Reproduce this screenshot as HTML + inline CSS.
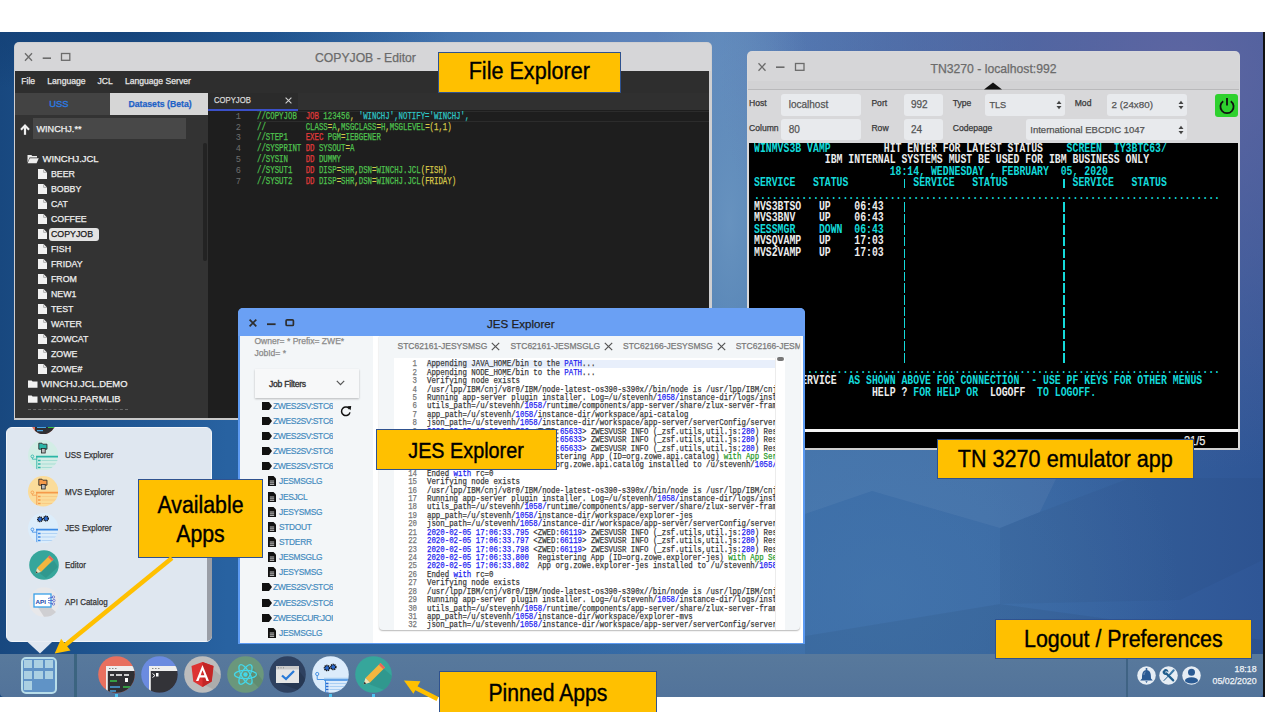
<!DOCTYPE html>
<html><head><meta charset="utf-8"><style>
*{margin:0;padding:0;box-sizing:border-box}
html,body{width:1265px;height:712px;overflow:hidden;background:#fff;font-family:"Liberation Sans",sans-serif}
.a{position:absolute;-webkit-text-stroke-width:0.25px}
.call{position:absolute;-webkit-text-stroke:0.35px #000;background:#ffc000;border:1px solid #2f528f;color:#000;font-family:"Liberation Sans",sans-serif;text-align:center;white-space:nowrap}
</style></head><body>
<div class="a" style="left:0;top:32px;width:1263px;height:665px;overflow:hidden;background:radial-gradient(ellipse 330px 60px at 120px 0px, rgba(18,62,115,0.75), rgba(18,62,115,0) 100%),radial-gradient(ellipse 460px 400px at 1180px 40px, rgba(96,102,162,0.95), rgba(96,102,162,0) 100%),radial-gradient(ellipse 90px 330px at 730px 190px, rgba(105,148,192,0.95), rgba(105,148,192,0.5) 60%, rgba(105,148,192,0) 100%),radial-gradient(ellipse 380px 200px at 650px 20px, rgba(100,135,190,0.9), rgba(100,135,190,0) 100%),radial-gradient(ellipse 300px 260px at 880px 560px, rgba(70,120,175,0.6), rgba(70,120,175,0) 100%),linear-gradient(90deg,#18487f 0%,#1e5490 8%,#2862a1 18%,#2d66a3 35%,#3a6ca6 60%,#3a69a3 78%,#2f5696 100%)"></div>
<div class="a" style="left:1263px;top:32px;width:2px;height:665px;background:#111;"></div>
<svg class="a" style="left:0;top:0" width="1265" height="712"><g><path d="M805 450H1070L1040 512L1000 528L872 491L805 514Z" fill="#ffffff" opacity="0.05"/><path d="M805 636L1000 604L1263 640V654H805Z" fill="#000" opacity="0.05"/><path d="M1000 528L1040 512L1130 478H1263V560L1180 600L1000 604Z" fill="#000" opacity="0.03"/></g></svg>
<div class="a" style="left:14px;top:42px;width:698px;height:378px;background:#cfcfd1;border-radius:5px 5px 0 0"></div>
<div class="a" style="left:15px;top:43px;width:696px;height:28px;background:#d6d6d8;border-radius:4px 4px 0 0"></div>
<svg class="a" style="left:14px;top:42px" width="70" height="28"><g stroke="#6b6b6b" stroke-width="1.3" fill="none"><path d="M11 11.2L18 18.8M18 11.2L11 18.8"/><path d="M28.7 16.2H37" stroke-width="1.6"/><rect x="47.5" y="11.5" width="8.3" height="6.8"/></g></svg>
<div class="a" style="left:315px;top:47.90px;line-height:20px;font-size:12.2px;color:#6b6b6b;font-weight:400;font-family:'Liberation Sans';white-space:pre;">COPYJOB - Editor</div>
<div class="a" style="left:15px;top:71px;width:694px;height:348px;background:#1e1e1e;"></div>
<div class="a" style="left:15px;top:71px;width:694px;height:22px;background:#2e2e2e;"></div>
<div class="a" style="left:21.3px;top:71.00px;line-height:20px;font-size:8.6px;color:#e6e6e6;font-weight:400;font-family:'Liberation Sans';white-space:pre;">File</div>
<div class="a" style="left:47.3px;top:71.00px;line-height:20px;font-size:8.6px;color:#e6e6e6;font-weight:400;font-family:'Liberation Sans';white-space:pre;">Language</div>
<div class="a" style="left:97.4px;top:71.00px;line-height:20px;font-size:8.6px;color:#e6e6e6;font-weight:400;font-family:'Liberation Sans';white-space:pre;">JCL</div>
<div class="a" style="left:124.9px;top:71.00px;line-height:20px;font-size:8.6px;color:#e6e6e6;font-weight:400;font-family:'Liberation Sans';white-space:pre;">Language Server</div>
<div class="a" style="left:15px;top:93px;width:193px;height:22px;background:#3d3d3d;"></div>
<div class="a" style="left:15px;top:93px;width:95px;height:22px;background:#434343;"></div>
<div class="a" style="left:110px;top:93px;width:98px;height:22px;background:#d6d6d6;"></div>
<div class="a" style="left:49.3px;top:94.00px;line-height:20px;font-size:9.4px;color:#2b7de6;font-weight:400;font-family:'Liberation Sans';white-space:pre;-webkit-text-stroke-width:0.3px">USS</div>
<div class="a" style="left:128.4px;top:94.00px;line-height:20px;font-size:8.7px;color:#1f62c7;font-weight:700;font-family:'Liberation Sans';white-space:pre;">Datasets (Beta)</div>
<div class="a" style="left:15px;top:115px;width:193px;height:304px;background:#333333;"></div>
<div class="a" style="left:202.7px;top:142.5px;width:4.7px;height:118px;background:#232323;border-radius:2.5px"></div>
<div class="a" style="left:33px;top:118px;width:153px;height:21px;background:#484848;"></div>
<svg class="a" style="left:19px;top:122px" width="12" height="14"><path d="M6 4.5V12.8" stroke="#f0f0f0" stroke-width="2.2" fill="none"/><path d="M1.2 7L6 2L10.8 7L9.3 8.4L6 5L2.7 8.4Z" fill="#f0f0f0"/></svg>
<div class="a" style="left:36.5px;top:118.50px;line-height:20px;font-size:9.1px;color:#f0f0f0;font-weight:400;font-family:'Liberation Sans';white-space:pre;">WINCHJ.**</div>
<svg class="a" style="left:27px;top:154px" width="12" height="10" viewBox="0 0 12 10"><path d="M0.5 1H4.3L5.3 2H10V3.5H2.5L0.5 8.5Z" fill="#eee"/><path d="M2.8 4.2H11.8L9.6 9.3H0.6Z" fill="#eee"/></svg>
<div class="a" style="left:42.5px;top:149.00px;line-height:20px;font-size:9.45px;color:#f0f0f0;font-weight:400;font-family:'Liberation Sans';white-space:pre;">WINCHJ.JCL</div>
<svg class="a" style="left:38px;top:169.3px" width="9" height="10" viewBox="0 0 9 10"><path d="M0 0H5.6L9 3.4V10H0Z" fill="#f2f2f2"/><path d="M5.6 0.3V3.4H8.7" fill="none" stroke="#999" stroke-width="0.7"/></svg>
<div class="a" style="left:51px;top:164.10px;line-height:20px;font-size:8.8px;color:#eee;font-weight:400;font-family:'Liberation Sans';white-space:pre;">BEER</div>
<svg class="a" style="left:38px;top:184.3px" width="9" height="10" viewBox="0 0 9 10"><path d="M0 0H5.6L9 3.4V10H0Z" fill="#f2f2f2"/><path d="M5.6 0.3V3.4H8.7" fill="none" stroke="#999" stroke-width="0.7"/></svg>
<div class="a" style="left:51px;top:179.10px;line-height:20px;font-size:8.8px;color:#eee;font-weight:400;font-family:'Liberation Sans';white-space:pre;">BOBBY</div>
<svg class="a" style="left:38px;top:199.3px" width="9" height="10" viewBox="0 0 9 10"><path d="M0 0H5.6L9 3.4V10H0Z" fill="#f2f2f2"/><path d="M5.6 0.3V3.4H8.7" fill="none" stroke="#999" stroke-width="0.7"/></svg>
<div class="a" style="left:51px;top:194.10px;line-height:20px;font-size:8.8px;color:#eee;font-weight:400;font-family:'Liberation Sans';white-space:pre;">CAT</div>
<svg class="a" style="left:38px;top:214.3px" width="9" height="10" viewBox="0 0 9 10"><path d="M0 0H5.6L9 3.4V10H0Z" fill="#f2f2f2"/><path d="M5.6 0.3V3.4H8.7" fill="none" stroke="#999" stroke-width="0.7"/></svg>
<div class="a" style="left:51px;top:209.10px;line-height:20px;font-size:8.8px;color:#eee;font-weight:400;font-family:'Liberation Sans';white-space:pre;">COFFEE</div>
<div class="a" style="left:49px;top:227.5px;width:50px;height:13.5px;background:#e3e3e3;border-radius:3px"></div>
<svg class="a" style="left:38px;top:229.3px" width="9" height="10" viewBox="0 0 9 10"><path d="M0 0H5.6L9 3.4V10H0Z" fill="#f2f2f2"/><path d="M5.6 0.3V3.4H8.7" fill="none" stroke="#999" stroke-width="0.7"/></svg>
<div class="a" style="left:51px;top:224.10px;line-height:20px;font-size:8.8px;color:#1a1a1a;font-weight:400;font-family:'Liberation Sans';white-space:pre;">COPYJOB</div>
<svg class="a" style="left:38px;top:244.3px" width="9" height="10" viewBox="0 0 9 10"><path d="M0 0H5.6L9 3.4V10H0Z" fill="#f2f2f2"/><path d="M5.6 0.3V3.4H8.7" fill="none" stroke="#999" stroke-width="0.7"/></svg>
<div class="a" style="left:51px;top:239.10px;line-height:20px;font-size:8.8px;color:#eee;font-weight:400;font-family:'Liberation Sans';white-space:pre;">FISH</div>
<svg class="a" style="left:38px;top:259.3px" width="9" height="10" viewBox="0 0 9 10"><path d="M0 0H5.6L9 3.4V10H0Z" fill="#f2f2f2"/><path d="M5.6 0.3V3.4H8.7" fill="none" stroke="#999" stroke-width="0.7"/></svg>
<div class="a" style="left:51px;top:254.10px;line-height:20px;font-size:8.8px;color:#eee;font-weight:400;font-family:'Liberation Sans';white-space:pre;">FRIDAY</div>
<svg class="a" style="left:38px;top:274.3px" width="9" height="10" viewBox="0 0 9 10"><path d="M0 0H5.6L9 3.4V10H0Z" fill="#f2f2f2"/><path d="M5.6 0.3V3.4H8.7" fill="none" stroke="#999" stroke-width="0.7"/></svg>
<div class="a" style="left:51px;top:269.10px;line-height:20px;font-size:8.8px;color:#eee;font-weight:400;font-family:'Liberation Sans';white-space:pre;">FROM</div>
<svg class="a" style="left:38px;top:289.3px" width="9" height="10" viewBox="0 0 9 10"><path d="M0 0H5.6L9 3.4V10H0Z" fill="#f2f2f2"/><path d="M5.6 0.3V3.4H8.7" fill="none" stroke="#999" stroke-width="0.7"/></svg>
<div class="a" style="left:51px;top:284.10px;line-height:20px;font-size:8.8px;color:#eee;font-weight:400;font-family:'Liberation Sans';white-space:pre;">NEW1</div>
<svg class="a" style="left:38px;top:304.3px" width="9" height="10" viewBox="0 0 9 10"><path d="M0 0H5.6L9 3.4V10H0Z" fill="#f2f2f2"/><path d="M5.6 0.3V3.4H8.7" fill="none" stroke="#999" stroke-width="0.7"/></svg>
<div class="a" style="left:51px;top:299.10px;line-height:20px;font-size:8.8px;color:#eee;font-weight:400;font-family:'Liberation Sans';white-space:pre;">TEST</div>
<svg class="a" style="left:38px;top:319.3px" width="9" height="10" viewBox="0 0 9 10"><path d="M0 0H5.6L9 3.4V10H0Z" fill="#f2f2f2"/><path d="M5.6 0.3V3.4H8.7" fill="none" stroke="#999" stroke-width="0.7"/></svg>
<div class="a" style="left:51px;top:314.10px;line-height:20px;font-size:8.8px;color:#eee;font-weight:400;font-family:'Liberation Sans';white-space:pre;">WATER</div>
<svg class="a" style="left:38px;top:334.3px" width="9" height="10" viewBox="0 0 9 10"><path d="M0 0H5.6L9 3.4V10H0Z" fill="#f2f2f2"/><path d="M5.6 0.3V3.4H8.7" fill="none" stroke="#999" stroke-width="0.7"/></svg>
<div class="a" style="left:51px;top:329.10px;line-height:20px;font-size:8.8px;color:#eee;font-weight:400;font-family:'Liberation Sans';white-space:pre;">ZOWCAT</div>
<svg class="a" style="left:38px;top:349.3px" width="9" height="10" viewBox="0 0 9 10"><path d="M0 0H5.6L9 3.4V10H0Z" fill="#f2f2f2"/><path d="M5.6 0.3V3.4H8.7" fill="none" stroke="#999" stroke-width="0.7"/></svg>
<div class="a" style="left:51px;top:344.10px;line-height:20px;font-size:8.8px;color:#eee;font-weight:400;font-family:'Liberation Sans';white-space:pre;">ZOWE</div>
<svg class="a" style="left:38px;top:364.3px" width="9" height="10" viewBox="0 0 9 10"><path d="M0 0H5.6L9 3.4V10H0Z" fill="#f2f2f2"/><path d="M5.6 0.3V3.4H8.7" fill="none" stroke="#999" stroke-width="0.7"/></svg>
<div class="a" style="left:51px;top:359.10px;line-height:20px;font-size:8.8px;color:#eee;font-weight:400;font-family:'Liberation Sans';white-space:pre;">ZOWE#</div>
<svg class="a" style="left:28px;top:379.7px" width="10" height="8" viewBox="0 0 10 8"><path d="M0 0.5H3.6L4.6 1.5H9.5V7.8H0Z" fill="#f2f2f2"/></svg>
<div class="a" style="left:41px;top:373.90px;line-height:20px;font-size:9.4px;color:#f0f0f0;font-weight:400;font-family:'Liberation Sans';white-space:pre;">WINCHJ.JCL.DEMO</div>
<svg class="a" style="left:28px;top:394.9px" width="10" height="8" viewBox="0 0 10 8"><path d="M0 0.5H3.6L4.6 1.5H9.5V7.8H0Z" fill="#f2f2f2"/></svg>
<div class="a" style="left:41px;top:389.10px;line-height:20px;font-size:9.4px;color:#f0f0f0;font-weight:400;font-family:'Liberation Sans';white-space:pre;">WINCHJ.PARMLIB</div>
<div class="a" style="left:28px;top:409px;width:100px;height:2px;overflow:hidden"><div style="border-top:1px dashed #666;width:100px"></div></div>
<div class="a" style="left:208px;top:93px;width:501px;height:17px;background:#303030;"></div>
<div class="a" style="left:208px;top:93px;width:90px;height:17px;background:#2b2b2b;"></div>
<div class="a" style="left:208px;top:109px;width:90px;height:2px;background:#3b50c8;"></div>
<div class="a" style="left:214px;top:90.00px;line-height:20px;font-size:8.8px;color:#d8d8d8;font-weight:400;font-family:'Liberation Sans';white-space:pre;transform:scaleX(0.875);transform-origin:0 50%">COPYJOB</div>
<svg class="a" style="left:284.5px;top:96.5px" width="7" height="7"><path d="M0.6 0.6L6.4 6.4M6.4 0.6L0.6 6.4" stroke="#d0d0d0" stroke-width="1.1"/></svg>
<div class="a" style="left:257px;top:111px;width:452px;height:11px;background:#1e1e1e;border-top:1px solid #2c2c2c;border-bottom:1px solid #2c2c2c"></div>
<div class="a" style="left:200px;top:110.60px;width:41px;text-align:right;line-height:12px;font-family:'Liberation Mono';font-size:8.6px;color:#6e6e6e;-webkit-text-stroke-width:0">1</div>
<div class="a" style="left:257px;top:110.60px;line-height:12px;font-family:'Liberation Mono';font-size:10px;white-space:pre;transform:scaleX(0.737);transform-origin:0 0"><span style="color:#4fc24f">//COPYJOB  </span><span style="color:#e23b3b">JOB</span><span style="color:#4fc24f"> 123456</span><span style="color:#d7c84a">, </span><span style="color:#2fc6c6">&#x27;WINCHJ&#x27;,NOTIFY=&#x27;WINCHJ&#x27;,</span></div>
<div class="a" style="left:200px;top:121.52px;width:41px;text-align:right;line-height:12px;font-family:'Liberation Mono';font-size:8.6px;color:#6e6e6e;-webkit-text-stroke-width:0">2</div>
<div class="a" style="left:257px;top:121.52px;line-height:12px;font-family:'Liberation Mono';font-size:10px;white-space:pre;transform:scaleX(0.737);transform-origin:0 0"><span style="color:#4fc24f">//         </span><span style="color:#4fc24f">CLASS</span><span style="color:#d7c84a">=</span><span style="color:#4fc24f">A</span><span style="color:#d7c84a">,</span><span style="color:#4fc24f">MSGCLASS</span><span style="color:#d7c84a">=</span><span style="color:#4fc24f">H</span><span style="color:#d7c84a">,</span><span style="color:#4fc24f">MSGLEVEL</span><span style="color:#d7c84a">=</span><span style="color:#d7c84a">(1,1)</span></div>
<div class="a" style="left:200px;top:132.44px;width:41px;text-align:right;line-height:12px;font-family:'Liberation Mono';font-size:8.6px;color:#6e6e6e;-webkit-text-stroke-width:0">3</div>
<div class="a" style="left:257px;top:132.44px;line-height:12px;font-family:'Liberation Mono';font-size:10px;white-space:pre;transform:scaleX(0.737);transform-origin:0 0"><span style="color:#4fc24f">//STEP1    </span><span style="color:#e23b3b">EXEC</span><span style="color:#4fc24f"> PGM</span><span style="color:#d7c84a">=</span><span style="color:#4fc24f">IEBGENER</span></div>
<div class="a" style="left:200px;top:143.36px;width:41px;text-align:right;line-height:12px;font-family:'Liberation Mono';font-size:8.6px;color:#6e6e6e;-webkit-text-stroke-width:0">4</div>
<div class="a" style="left:257px;top:143.36px;line-height:12px;font-family:'Liberation Mono';font-size:10px;white-space:pre;transform:scaleX(0.737);transform-origin:0 0"><span style="color:#4fc24f">//SYSPRINT </span><span style="color:#e23b3b">DD</span><span style="color:#4fc24f"> SYSOUT</span><span style="color:#d7c84a">=</span><span style="color:#4fc24f">A</span></div>
<div class="a" style="left:200px;top:154.28px;width:41px;text-align:right;line-height:12px;font-family:'Liberation Mono';font-size:8.6px;color:#6e6e6e;-webkit-text-stroke-width:0">5</div>
<div class="a" style="left:257px;top:154.28px;line-height:12px;font-family:'Liberation Mono';font-size:10px;white-space:pre;transform:scaleX(0.737);transform-origin:0 0"><span style="color:#4fc24f">//SYSIN    </span><span style="color:#e23b3b">DD</span><span style="color:#4fc24f"> DUMMY</span></div>
<div class="a" style="left:200px;top:165.20px;width:41px;text-align:right;line-height:12px;font-family:'Liberation Mono';font-size:8.6px;color:#6e6e6e;-webkit-text-stroke-width:0">6</div>
<div class="a" style="left:257px;top:165.20px;line-height:12px;font-family:'Liberation Mono';font-size:10px;white-space:pre;transform:scaleX(0.737);transform-origin:0 0"><span style="color:#4fc24f">//SYSUT1   </span><span style="color:#e23b3b">DD</span><span style="color:#4fc24f"> DISP</span><span style="color:#d7c84a">=</span><span style="color:#4fc24f">SHR</span><span style="color:#d7c84a">,</span><span style="color:#4fc24f">DSN</span><span style="color:#d7c84a">=</span><span style="color:#4fc24f">WINCHJ.JCL</span><span style="color:#d7c84a">(FISH)</span></div>
<div class="a" style="left:200px;top:176.12px;width:41px;text-align:right;line-height:12px;font-family:'Liberation Mono';font-size:8.6px;color:#6e6e6e;-webkit-text-stroke-width:0">7</div>
<div class="a" style="left:257px;top:176.12px;line-height:12px;font-family:'Liberation Mono';font-size:10px;white-space:pre;transform:scaleX(0.737);transform-origin:0 0"><span style="color:#4fc24f">//SYSUT2   </span><span style="color:#e23b3b">DD</span><span style="color:#4fc24f"> DISP</span><span style="color:#d7c84a">=</span><span style="color:#4fc24f">SHR</span><span style="color:#d7c84a">,</span><span style="color:#4fc24f">DSN</span><span style="color:#d7c84a">=</span><span style="color:#4fc24f">WINCHJ.JCL</span><span style="color:#d7c84a">(FRIDAY)</span></div>
<div class="a" style="left:14px;top:418px;width:698px;height:2px;background:#c9c9c9;"></div>
<div class="a" style="left:747px;top:51px;width:493px;height:399px;background:#d8d8da;border-radius:5px 5px 0 0"></div>
<div class="a" style="left:748px;top:52px;width:491px;height:29px;background:#d6d6d8;border-radius:4px 4px 0 0"></div>
<svg class="a" style="left:747px;top:51px" width="70" height="30"><g stroke="#6b6b6b" stroke-width="1.3" fill="none"><path d="M11.5 12.3L18.5 19.7M18.5 12.3L11.5 19.7"/><path d="M29 16.2H37.5" stroke-width="1.6"/><rect x="48.5" y="12.5" width="8.5" height="6.8"/></g></svg>
<div class="a" style="left:930.5px;top:58.80px;line-height:20px;font-size:12.2px;color:#6b6b6b;font-weight:400;font-family:'Liberation Sans';white-space:pre;">TN3270 - localhost:992</div>
<div class="a" style="left:748px;top:81px;width:491px;height:8px;background:#d2d2d4;"></div>
<div class="a" style="left:748px;top:89px;width:491px;height:1px;background:#b9b9bb;"></div>
<svg class="a" style="left:984px;top:82px" width="19" height="8"><path d="M0 7.5L9 0.5L18 7.5Z" fill="#111"/></svg>
<div class="a" style="left:749px;top:93.00px;line-height:20px;font-size:8.6px;color:#3a3a3a;font-weight:400;font-family:'Liberation Sans';white-space:pre;">Host</div>
<div class="a" style="left:871.4px;top:93.00px;line-height:20px;font-size:8.6px;color:#3a3a3a;font-weight:400;font-family:'Liberation Sans';white-space:pre;">Port</div>
<div class="a" style="left:952.7px;top:93.00px;line-height:20px;font-size:8.6px;color:#3a3a3a;font-weight:400;font-family:'Liberation Sans';white-space:pre;">Type</div>
<div class="a" style="left:1074.7px;top:93.00px;line-height:20px;font-size:8.6px;color:#3a3a3a;font-weight:400;font-family:'Liberation Sans';white-space:pre;">Mod</div>
<div class="a" style="left:749px;top:117.50px;line-height:20px;font-size:8.6px;color:#3a3a3a;font-weight:400;font-family:'Liberation Sans';white-space:pre;">Column</div>
<div class="a" style="left:871.4px;top:117.50px;line-height:20px;font-size:8.6px;color:#3a3a3a;font-weight:400;font-family:'Liberation Sans';white-space:pre;">Row</div>
<div class="a" style="left:952.7px;top:117.50px;line-height:20px;font-size:8.6px;color:#3a3a3a;font-weight:400;font-family:'Liberation Sans';white-space:pre;">Codepage</div>
<div class="a" style="left:781px;top:94px;width:80px;height:22px;background:#e8eaed;border-radius:3px"></div>
<div class="a" style="left:904px;top:94px;width:39px;height:22px;background:#e8eaed;border-radius:3px"></div>
<div class="a" style="left:985px;top:94px;width:80px;height:22px;background:#e8eaed;border-radius:3px"></div>
<div class="a" style="left:1107px;top:94px;width:80px;height:22px;background:#e8eaed;border-radius:3px"></div>
<div class="a" style="left:781px;top:119px;width:80px;height:21px;background:#e8eaed;border-radius:3px"></div>
<div class="a" style="left:904px;top:119px;width:39px;height:21px;background:#e8eaed;border-radius:3px"></div>
<div class="a" style="left:1026px;top:119px;width:161px;height:21px;background:#e8eaed;border-radius:3px"></div>
<div class="a" style="left:788.7px;top:95.40px;line-height:20px;font-size:10.0px;color:#555;font-weight:400;font-family:'Liberation Sans';white-space:pre;">localhost</div>
<div class="a" style="left:788.7px;top:119.50px;line-height:20px;font-size:10.0px;color:#555;font-weight:400;font-family:'Liberation Sans';white-space:pre;">80</div>
<div class="a" style="left:911px;top:95.40px;line-height:20px;font-size:10.0px;color:#555;font-weight:400;font-family:'Liberation Sans';white-space:pre;">992</div>
<div class="a" style="left:911px;top:119.50px;line-height:20px;font-size:10.0px;color:#555;font-weight:400;font-family:'Liberation Sans';white-space:pre;">24</div>
<div class="a" style="left:989.4px;top:95.20px;line-height:20px;font-size:9.2px;color:#555;font-weight:400;font-family:'Liberation Sans';white-space:pre;">TLS</div>
<div class="a" style="left:1111.5px;top:95.20px;line-height:20px;font-size:9.8px;color:#555;font-weight:400;font-family:'Liberation Sans';white-space:pre;">2 (24x80)</div>
<div class="a" style="left:1030.3px;top:119.50px;line-height:20px;font-size:9.5px;color:#555;font-weight:400;font-family:'Liberation Sans';white-space:pre;">International EBCDIC 1047</div>
<svg class="a" style="left:1055.5px;top:100px" width="6" height="10"><path d="M0.5 4L3 0.8L5.5 4ZM0.5 6L3 9.2L5.5 6Z" fill="#444"/></svg>
<svg class="a" style="left:1178px;top:100px" width="6" height="10"><path d="M0.5 4L3 0.8L5.5 4ZM0.5 6L3 9.2L5.5 6Z" fill="#444"/></svg>
<svg class="a" style="left:1178px;top:124.5px" width="6" height="10"><path d="M0.5 4L3 0.8L5.5 4ZM0.5 6L3 9.2L5.5 6Z" fill="#444"/></svg>
<div class="a" style="left:1214.5px;top:93.5px;width:23.5px;height:23px;background:#2ed12e;border-radius:3px"></div>
<svg class="a" style="left:1214.5px;top:93.5px" width="24" height="23"><path d="M8.2 7.2A6.6 6.6 0 1 0 15.8 7.2" stroke="#111" stroke-width="1.8" fill="none"/><path d="M12 4V11.5" stroke="#111" stroke-width="1.8"/></svg>
<div class="a" style="left:748.8px;top:142.6px;width:489px;height:305.4px;background:#000;"></div>
<div class="a" style="left:748px;top:429.2px;width:490px;height:3px;background:#f4f4f4;"></div>
<div class="a" style="left:1237.6px;top:142px;width:2.4px;height:308px;background:#dcdcdc;"></div>
<div class="a" style="left:747px;top:448px;width:493px;height:2px;background:#d0d0d0;"></div>
<div class="a" style="left:904.1px;top:178.8px;width:1.3px;height:9.5px;background:#14dada;"></div>
<div class="a" style="left:1063.4px;top:178.8px;width:1.3px;height:9.5px;background:#14dada;"></div>
<div class="a" style="left:904.1px;top:202.0px;width:1.3px;height:9.5px;background:#14dada;"></div>
<div class="a" style="left:1063.4px;top:202.0px;width:1.3px;height:9.5px;background:#14dada;"></div>
<div class="a" style="left:904.1px;top:213.6px;width:1.3px;height:9.5px;background:#14dada;"></div>
<div class="a" style="left:1063.4px;top:213.6px;width:1.3px;height:9.5px;background:#14dada;"></div>
<div class="a" style="left:904.1px;top:225.2px;width:1.3px;height:9.5px;background:#14dada;"></div>
<div class="a" style="left:1063.4px;top:225.2px;width:1.3px;height:9.5px;background:#14dada;"></div>
<div class="a" style="left:904.1px;top:236.9px;width:1.3px;height:9.5px;background:#14dada;"></div>
<div class="a" style="left:1063.4px;top:236.9px;width:1.3px;height:9.5px;background:#14dada;"></div>
<div class="a" style="left:904.1px;top:248.5px;width:1.3px;height:9.5px;background:#14dada;"></div>
<div class="a" style="left:1063.4px;top:248.5px;width:1.3px;height:9.5px;background:#14dada;"></div>
<div class="a" style="left:904.1px;top:260.1px;width:1.3px;height:9.5px;background:#14dada;"></div>
<div class="a" style="left:1063.4px;top:260.1px;width:1.3px;height:9.5px;background:#14dada;"></div>
<div class="a" style="left:904.1px;top:271.7px;width:1.3px;height:9.5px;background:#14dada;"></div>
<div class="a" style="left:1063.4px;top:271.7px;width:1.3px;height:9.5px;background:#14dada;"></div>
<div class="a" style="left:904.1px;top:283.3px;width:1.3px;height:9.5px;background:#14dada;"></div>
<div class="a" style="left:1063.4px;top:283.3px;width:1.3px;height:9.5px;background:#14dada;"></div>
<div class="a" style="left:904.1px;top:295.0px;width:1.3px;height:9.5px;background:#14dada;"></div>
<div class="a" style="left:1063.4px;top:295.0px;width:1.3px;height:9.5px;background:#14dada;"></div>
<div class="a" style="left:904.1px;top:306.6px;width:1.3px;height:9.5px;background:#14dada;"></div>
<div class="a" style="left:1063.4px;top:306.6px;width:1.3px;height:9.5px;background:#14dada;"></div>
<div class="a" style="left:904.1px;top:318.2px;width:1.3px;height:9.5px;background:#14dada;"></div>
<div class="a" style="left:1063.4px;top:318.2px;width:1.3px;height:9.5px;background:#14dada;"></div>
<div class="a" style="left:904.1px;top:329.8px;width:1.3px;height:9.5px;background:#14dada;"></div>
<div class="a" style="left:1063.4px;top:329.8px;width:1.3px;height:9.5px;background:#14dada;"></div>
<div class="a" style="left:904.1px;top:341.4px;width:1.3px;height:9.5px;background:#14dada;"></div>
<div class="a" style="left:1063.4px;top:341.4px;width:1.3px;height:9.5px;background:#14dada;"></div>
<div class="a" style="left:904.1px;top:353.1px;width:1.3px;height:9.5px;background:#14dada;"></div>
<div class="a" style="left:1063.4px;top:353.1px;width:1.3px;height:9.5px;background:#14dada;"></div>
<div class="a" style="left:754.3px;top:140.50px;line-height:16px;font-family:'Liberation Mono';font-size:13.5px;font-weight:700;-webkit-text-stroke-width:0;white-space:pre;transform:scaleX(0.728);transform-origin:0 0"><span style="color:#14dada">WINMVS3B VAMP</span>         <span style="color:#ececec">HIT ENTER FOR LATEST STATUS</span>    <span style="color:#14dada">SCREEN</span>  <span style="color:#14dada">IY3BTC63/</span></div>
<div class="a" style="left:754.3px;top:152.12px;line-height:16px;font-family:'Liberation Mono';font-size:13.5px;font-weight:700;-webkit-text-stroke-width:0;white-space:pre;transform:scaleX(0.728);transform-origin:0 0">            <span style="color:#ececec">IBM INTERNAL SYSTEMS MUST BE USED FOR IBM BUSINESS ONLY</span></div>
<div class="a" style="left:754.3px;top:163.74px;line-height:16px;font-family:'Liberation Mono';font-size:13.5px;font-weight:700;-webkit-text-stroke-width:0;white-space:pre;transform:scaleX(0.728);transform-origin:0 0">                       <span style="color:#14dada">18:14, WEDNESDAY , FEBRUARY  05, 2020</span></div>
<div class="a" style="left:754.3px;top:175.36px;line-height:16px;font-family:'Liberation Mono';font-size:13.5px;font-weight:700;-webkit-text-stroke-width:0;white-space:pre;transform:scaleX(0.728);transform-origin:0 0"><span style="color:#14dada">SERVICE   STATUS</span>           <span style="color:#14dada">SERVICE   STATUS</span>           <span style="color:#14dada">SERVICE   STATUS</span></div>
<div class="a" style="left:754.3px;top:187.98px;line-height:16px;font-family:'Liberation Mono';font-size:13.5px;font-weight:700;-webkit-text-stroke-width:0;white-space:pre;transform:scaleX(0.728);transform-origin:0 0"><span style="color:#14dada">...............................................................................</span></div>
<div class="a" style="left:754.3px;top:198.60px;line-height:16px;font-family:'Liberation Mono';font-size:13.5px;font-weight:700;-webkit-text-stroke-width:0;white-space:pre;transform:scaleX(0.728);transform-origin:0 0"><span style="color:#ececec">MVS3BTSO</span>   <span style="color:#ececec">UP</span>    <span style="color:#ececec">06:43</span></div>
<div class="a" style="left:754.3px;top:210.22px;line-height:16px;font-family:'Liberation Mono';font-size:13.5px;font-weight:700;-webkit-text-stroke-width:0;white-space:pre;transform:scaleX(0.728);transform-origin:0 0"><span style="color:#ececec">MVS3BNV</span>    <span style="color:#ececec">UP</span>    <span style="color:#ececec">06:43</span></div>
<div class="a" style="left:754.3px;top:221.84px;line-height:16px;font-family:'Liberation Mono';font-size:13.5px;font-weight:700;-webkit-text-stroke-width:0;white-space:pre;transform:scaleX(0.728);transform-origin:0 0"><span style="color:#14dada">SESSMGR</span>    <span style="color:#14dada">DOWN</span>  <span style="color:#14dada">06:43</span></div>
<div class="a" style="left:754.3px;top:233.46px;line-height:16px;font-family:'Liberation Mono';font-size:13.5px;font-weight:700;-webkit-text-stroke-width:0;white-space:pre;transform:scaleX(0.728);transform-origin:0 0"><span style="color:#ececec">MVSQVAMP</span>   <span style="color:#ececec">UP</span>    <span style="color:#ececec">17:03</span></div>
<div class="a" style="left:754.3px;top:245.08px;line-height:16px;font-family:'Liberation Mono';font-size:13.5px;font-weight:700;-webkit-text-stroke-width:0;white-space:pre;transform:scaleX(0.728);transform-origin:0 0"><span style="color:#ececec">MVS2VAMP</span>   <span style="color:#ececec">UP</span>    <span style="color:#ececec">17:03</span></div>
<div class="a" style="left:754.3px;top:362.28px;line-height:16px;font-family:'Liberation Mono';font-size:13.5px;font-weight:700;-webkit-text-stroke-width:0;white-space:pre;transform:scaleX(0.728);transform-origin:0 0"><span style="color:#14dada">...............................................................................</span></div>
<div class="a" style="left:754.3px;top:372.90px;line-height:16px;font-family:'Liberation Mono';font-size:13.5px;font-weight:700;-webkit-text-stroke-width:0;white-space:pre;transform:scaleX(0.728);transform-origin:0 0">       <span style="color:#ececec">SERVICE</span>  <span style="color:#14dada">AS SHOWN ABOVE FOR CONNECTION  - USE PF KEYS FOR OTHER MENUS</span></div>
<div class="a" style="left:754.3px;top:384.52px;line-height:16px;font-family:'Liberation Mono';font-size:13.5px;font-weight:700;-webkit-text-stroke-width:0;white-space:pre;transform:scaleX(0.728);transform-origin:0 0">                    <span style="color:#ececec">HELP ?</span> <span style="color:#14dada">FOR HELP OR</span>  <span style="color:#ececec">LOGOFF</span>  <span style="color:#14dada">TO LOGOFF.</span></div>
<div class="a" style="left:1183.5px;top:431.30px;line-height:20px;font-size:12.5px;color:#eee;font-weight:400;font-family:'Liberation Sans';white-space:pre;transform:scaleX(0.88);transform-origin:0 50%">21/5</div>
<div class="a" style="left:237.5px;top:308px;width:567.5px;height:336px;background:#5c9af2;border-radius:5px 5px 0 0"></div>
<div class="a" style="left:237.5px;top:308px;width:567.5px;height:28px;background:#6aa0f4;border-radius:5px 5px 0 0"></div>
<svg class="a" style="left:238px;top:308px" width="70" height="28"><g stroke="#2e2e2e" stroke-width="1.7" fill="none"><path d="M11.6 11.6L18.3 18.3M18.3 11.6L11.6 18.3"/><path d="M29 16.2H37.6" stroke-width="1.8"/><rect x="48.1" y="11.8" width="7.3" height="5.7" rx="1"/></g></svg>
<div class="a" style="left:487px;top:313.50px;line-height:20px;font-size:11.6px;color:#1f1f1f;font-weight:400;font-family:'Liberation Sans';white-space:pre;">JES Explorer</div>
<div class="a" style="left:240px;top:336px;width:133px;height:306.6px;background:#f3f6f8;"></div>
<div class="a" style="left:373px;top:336px;width:430px;height:306.6px;background:#ffffff;"></div>
<div class="a" style="left:379px;top:336px;width:421px;height:294px;background:#f3f6f8;border-radius:0 0 4px 4px;box-shadow:0 1px 1.5px rgba(0,0,0,0.28)"></div>
<div class="a" style="left:254.4px;top:331.00px;line-height:20px;font-size:8.55px;color:#8a8a8a;font-weight:400;font-family:'Liberation Sans';white-space:pre;">Owner= * Prefix= ZWE*</div>
<div class="a" style="left:254.4px;top:343.00px;line-height:20px;font-size:8.55px;color:#8a8a8a;font-weight:400;font-family:'Liberation Sans';white-space:pre;">JobId= *</div>
<div class="a" style="left:254.5px;top:369px;width:104px;height:29px;background:#f7f8f9;box-shadow:0 1px 2px rgba(0,0,0,0.25)"></div>
<div class="a" style="left:269px;top:373.80px;line-height:20px;font-size:8.6px;color:#333;font-weight:400;font-family:'Liberation Sans';white-space:pre;letter-spacing:-0.25px;-webkit-text-stroke-width:0.35px">Job Filters</div>
<svg class="a" style="left:336px;top:380px" width="9" height="6"><path d="M0.8 0.8L4.5 4.6L8.2 0.8" stroke="#555" stroke-width="1.2" fill="none"/></svg>
<svg class="a" style="left:340px;top:405px" width="12" height="12" viewBox="0 0 12 12"><path d="M9.6 4.2A4.3 4.3 0 1 0 10 7.4" stroke="#111" stroke-width="1.5" fill="none"/><path d="M7.2 1.2L11.2 1.0L10.6 5.2Z" fill="#111"/></svg>
<svg class="a" style="left:262px;top:401.6px" width="10" height="8" viewBox="0 0 10 8"><path d="M0 0H7L10 4L7 8H0Z" fill="#111"/></svg>
<div class="a" style="left:273px;top:395.60px;width:60.3px;overflow:hidden;line-height:20px;font-size:8.6px;letter-spacing:-0.42px;color:#4189bd;white-space:pre;-webkit-text-stroke-width:0.15px">ZWES2SV:STC6</div>
<svg class="a" style="left:262px;top:416.8px" width="10" height="8" viewBox="0 0 10 8"><path d="M0 0H7L10 4L7 8H0Z" fill="#111"/></svg>
<div class="a" style="left:273px;top:410.75px;width:60.3px;overflow:hidden;line-height:20px;font-size:8.6px;letter-spacing:-0.42px;color:#4189bd;white-space:pre;-webkit-text-stroke-width:0.15px">ZWES2SV:STC6</div>
<svg class="a" style="left:262px;top:431.9px" width="10" height="8" viewBox="0 0 10 8"><path d="M0 0H7L10 4L7 8H0Z" fill="#111"/></svg>
<div class="a" style="left:273px;top:425.90px;width:60.3px;overflow:hidden;line-height:20px;font-size:8.6px;letter-spacing:-0.42px;color:#4189bd;white-space:pre;-webkit-text-stroke-width:0.15px">ZWES2SV:STC6</div>
<svg class="a" style="left:262px;top:447.1px" width="10" height="8" viewBox="0 0 10 8"><path d="M0 0H7L10 4L7 8H0Z" fill="#111"/></svg>
<div class="a" style="left:273px;top:441.05px;width:60.3px;overflow:hidden;line-height:20px;font-size:8.6px;letter-spacing:-0.42px;color:#4189bd;white-space:pre;-webkit-text-stroke-width:0.15px">ZWES2SV:STC6</div>
<svg class="a" style="left:262px;top:462.2px" width="10" height="8" viewBox="0 0 10 8"><path d="M0 0H7L10 4L7 8H0Z" fill="#111"/></svg>
<div class="a" style="left:273px;top:456.20px;width:60.3px;overflow:hidden;line-height:20px;font-size:8.6px;letter-spacing:-0.42px;color:#4189bd;white-space:pre;-webkit-text-stroke-width:0.15px">ZWES2SV:STC6</div>
<svg class="a" style="left:268px;top:476.4px" width="8" height="10" viewBox="0 0 8 10"><path d="M0 0H5.5L8 2.5V10H0Z" fill="#111"/><path d="M1.8 5H6.2M1.8 6.8H6.2M1.8 8.4H6.2" stroke="#eee" stroke-width="0.8"/></svg>
<div class="a" style="left:279px;top:471.35px;line-height:20px;font-size:8.4px;color:#4189bd;font-weight:400;font-family:'Liberation Sans';white-space:pre;letter-spacing:-0.3px;-webkit-text-stroke-width:0.15px">JESMSGLG</div>
<svg class="a" style="left:268px;top:491.5px" width="8" height="10" viewBox="0 0 8 10"><path d="M0 0H5.5L8 2.5V10H0Z" fill="#111"/><path d="M1.8 5H6.2M1.8 6.8H6.2M1.8 8.4H6.2" stroke="#eee" stroke-width="0.8"/></svg>
<div class="a" style="left:279px;top:486.50px;line-height:20px;font-size:8.4px;color:#4189bd;font-weight:400;font-family:'Liberation Sans';white-space:pre;letter-spacing:-0.3px;-webkit-text-stroke-width:0.15px">JESJCL</div>
<svg class="a" style="left:268px;top:506.7px" width="8" height="10" viewBox="0 0 8 10"><path d="M0 0H5.5L8 2.5V10H0Z" fill="#111"/><path d="M1.8 5H6.2M1.8 6.8H6.2M1.8 8.4H6.2" stroke="#eee" stroke-width="0.8"/></svg>
<div class="a" style="left:279px;top:501.65px;line-height:20px;font-size:8.4px;color:#4189bd;font-weight:400;font-family:'Liberation Sans';white-space:pre;letter-spacing:-0.3px;-webkit-text-stroke-width:0.15px">JESYSMSG</div>
<svg class="a" style="left:268px;top:521.8px" width="8" height="10" viewBox="0 0 8 10"><path d="M0 0H5.5L8 2.5V10H0Z" fill="#111"/><path d="M1.8 5H6.2M1.8 6.8H6.2M1.8 8.4H6.2" stroke="#eee" stroke-width="0.8"/></svg>
<div class="a" style="left:279px;top:516.80px;line-height:20px;font-size:8.4px;color:#4189bd;font-weight:400;font-family:'Liberation Sans';white-space:pre;letter-spacing:-0.3px;-webkit-text-stroke-width:0.15px">STDOUT</div>
<svg class="a" style="left:268px;top:537.0px" width="8" height="10" viewBox="0 0 8 10"><path d="M0 0H5.5L8 2.5V10H0Z" fill="#111"/><path d="M1.8 5H6.2M1.8 6.8H6.2M1.8 8.4H6.2" stroke="#eee" stroke-width="0.8"/></svg>
<div class="a" style="left:279px;top:531.95px;line-height:20px;font-size:8.4px;color:#4189bd;font-weight:400;font-family:'Liberation Sans';white-space:pre;letter-spacing:-0.3px;-webkit-text-stroke-width:0.15px">STDERR</div>
<svg class="a" style="left:268px;top:552.1px" width="8" height="10" viewBox="0 0 8 10"><path d="M0 0H5.5L8 2.5V10H0Z" fill="#111"/><path d="M1.8 5H6.2M1.8 6.8H6.2M1.8 8.4H6.2" stroke="#eee" stroke-width="0.8"/></svg>
<div class="a" style="left:279px;top:547.10px;line-height:20px;font-size:8.4px;color:#4189bd;font-weight:400;font-family:'Liberation Sans';white-space:pre;letter-spacing:-0.3px;-webkit-text-stroke-width:0.15px">JESMSGLG</div>
<svg class="a" style="left:268px;top:567.2px" width="8" height="10" viewBox="0 0 8 10"><path d="M0 0H5.5L8 2.5V10H0Z" fill="#111"/><path d="M1.8 5H6.2M1.8 6.8H6.2M1.8 8.4H6.2" stroke="#eee" stroke-width="0.8"/></svg>
<div class="a" style="left:279px;top:562.25px;line-height:20px;font-size:8.4px;color:#4189bd;font-weight:400;font-family:'Liberation Sans';white-space:pre;letter-spacing:-0.3px;-webkit-text-stroke-width:0.15px">JESYSMSG</div>
<svg class="a" style="left:262px;top:583.4px" width="10" height="8" viewBox="0 0 10 8"><path d="M0 0H7L10 4L7 8H0Z" fill="#111"/></svg>
<div class="a" style="left:273px;top:577.40px;width:60.3px;overflow:hidden;line-height:20px;font-size:8.6px;letter-spacing:-0.42px;color:#4189bd;white-space:pre;-webkit-text-stroke-width:0.15px">ZWES2SV:STC6</div>
<svg class="a" style="left:262px;top:598.6px" width="10" height="8" viewBox="0 0 10 8"><path d="M0 0H7L10 4L7 8H0Z" fill="#111"/></svg>
<div class="a" style="left:273px;top:592.55px;width:60.3px;overflow:hidden;line-height:20px;font-size:8.6px;letter-spacing:-0.42px;color:#4189bd;white-space:pre;-webkit-text-stroke-width:0.15px">ZWES2SV:STC6</div>
<svg class="a" style="left:262px;top:613.7px" width="10" height="8" viewBox="0 0 10 8"><path d="M0 0H7L10 4L7 8H0Z" fill="#111"/></svg>
<div class="a" style="left:273px;top:607.70px;width:60.3px;overflow:hidden;line-height:20px;font-size:8.6px;letter-spacing:-0.42px;color:#4189bd;white-space:pre;-webkit-text-stroke-width:0.15px">ZWESECUR:JOI</div>
<svg class="a" style="left:268px;top:627.9px" width="8" height="10" viewBox="0 0 8 10"><path d="M0 0H5.5L8 2.5V10H0Z" fill="#111"/><path d="M1.8 5H6.2M1.8 6.8H6.2M1.8 8.4H6.2" stroke="#eee" stroke-width="0.8"/></svg>
<div class="a" style="left:279px;top:622.85px;line-height:20px;font-size:8.4px;color:#4189bd;font-weight:400;font-family:'Liberation Sans';white-space:pre;letter-spacing:-0.3px;-webkit-text-stroke-width:0.15px">JESMSGLG</div>
<div class="a" style="left:397.5px;top:335.50px;line-height:20px;font-size:8.5px;color:#7a7a7a;font-weight:400;font-family:'Liberation Sans';white-space:pre;">STC62161-JESYSMSG</div>
<svg class="a" style="left:491.3px;top:341.5px" width="9" height="9"><path d="M0.8 0.8L8.2 8.2M8.2 0.8L0.8 8.2" stroke="#555" stroke-width="1.2"/></svg>
<div class="a" style="left:510.4px;top:335.50px;line-height:20px;font-size:8.5px;color:#7a7a7a;font-weight:400;font-family:'Liberation Sans';white-space:pre;">STC62161-JESMSGLG</div>
<svg class="a" style="left:603.9px;top:341.5px" width="9" height="9"><path d="M0.8 0.8L8.2 8.2M8.2 0.8L0.8 8.2" stroke="#555" stroke-width="1.2"/></svg>
<div class="a" style="left:623px;top:335.50px;line-height:20px;font-size:8.5px;color:#7a7a7a;font-weight:400;font-family:'Liberation Sans';white-space:pre;">STC62166-JESYSMSG</div>
<svg class="a" style="left:716.6px;top:341.5px" width="9" height="9"><path d="M0.8 0.8L8.2 8.2M8.2 0.8L0.8 8.2" stroke="#555" stroke-width="1.2"/></svg>
<div class="a" style="left:735.7px;top:335.5px;width:64.7px;overflow:hidden;line-height:20px;font-size:8.5px;color:#7a7a7a;white-space:pre">STC62166-JESMSGLG</div>
<div class="a" style="left:394px;top:357.5px;width:391px;height:272.5px;background:#ffffff;"></div>
<div class="a" style="left:774.5px;top:357.5px;width:1px;height:272.5px;background:#ececec;"></div>
<div class="a" style="left:776.8px;top:357px;width:7px;height:3.5px;background:#777;border-radius:2px"></div>
<div class="a" style="left:427px;top:360px;width:347.5px;height:8.2px;background:#e8effb;"></div>
<div class="a" style="left:394px;top:357.5px;width:380.5px;height:272.5px;overflow:hidden;-webkit-text-stroke-width:0"><div class="a" style="left:0;top:2.8px;width:23px;text-align:right;line-height:8.42px;font-family:'Liberation Mono';font-size:9px;color:#777;transform:scaleX(0.82);transform-origin:100% 0">1<br>2<br>3<br>4<br>5<br>6<br>7<br>8<br>9<br>10<br>11<br>12<br>13<br>14<br>15<br>16<br>17<br>18<br>19<br>20<br>21<br>22<br>23<br>24<br>25<br>26<br>27<br>28<br>29<br>30<br>31<br>32</div><div class="a" style="left:33.4px;top:2.8px;line-height:8.42px;font-family:'Liberation Mono';font-size:9px;white-space:pre;transform:scaleX(0.82);transform-origin:0 0"><span style="color:#3a3a3a">Appending JAVA_HOME/bin to the </span><span style="color:#1d1df0">PATH</span><span style="color:#3a3a3a">...</span><br><span style="color:#3a3a3a">Appending NODE_HOME/bin to the </span><span style="color:#1d1df0">PATH</span><span style="color:#3a3a3a">...</span><br><span style="color:#3a3a3a">Verifying node exists</span><br><span style="color:#3a3a3a">/usr/lpp/IBM/cnj/v8r0/IBM/node-latest-os390-s390x//bin/node is /usr/lpp/IBM/cnj</span><br><span style="color:#3a3a3a">Running app-server plugin installer. Log=/u/stevenh/</span><span style="color:#1d1df0">1058/</span><span style="color:#3a3a3a">instance-dir/logs/inst</span><br><span style="color:#3a3a3a">utils_path=/u/stevenh/</span><span style="color:#1d1df0">1058/</span><span style="color:#3a3a3a">runtime/components/app-server/share/zlux-server-fram</span><br><span style="color:#3a3a3a">app_path=/u/stevenh/</span><span style="color:#1d1df0">1058/</span><span style="color:#3a3a3a">instance-dir/workspace/api-catalog</span><br><span style="color:#3a3a3a">json_path=/u/stevenh/</span><span style="color:#1d1df0">1058/</span><span style="color:#3a3a3a">instance-dir/workspace/app-server/serverConfig/server</span><br><span style="color:#1d1df0">2020-02-05 17:06:33.786</span><span style="color:#3a3a3a"> &lt;ZWED:</span><span style="color:#1d1df0">65633</span><span style="color:#3a3a3a">&gt; ZWESVUSR INFO (_zsf.utils,util.js:</span><span style="color:#1d1df0">280</span><span style="color:#3a3a3a">) Res</span><br><span style="color:#1d1df0">2020-02-05 17:06:33.788</span><span style="color:#3a3a3a"> &lt;ZWED:</span><span style="color:#1d1df0">65633</span><span style="color:#3a3a3a">&gt; ZWESVUSR INFO (_zsf.utils,util.js:</span><span style="color:#1d1df0">280</span><span style="color:#3a3a3a">) Res</span><br><span style="color:#1d1df0">2020-02-05 17:06:33.789</span><span style="color:#3a3a3a"> &lt;ZWED:</span><span style="color:#1d1df0">65633</span><span style="color:#3a3a3a">&gt; ZWESVUSR INFO (_zsf.utils,util.js:</span><span style="color:#1d1df0">280</span><span style="color:#3a3a3a">) Res</span><br><span style="color:#1d1df0">2020-02-05 17:06:33.791</span><span style="color:#3a3a3a">  Registering App (ID=org.zowe.api.catalog) </span><span style="color:#2a9a2a">with App Ser</span><br><span style="color:#1d1df0">2020-02-05 17:06:33.793</span><span style="color:#3a3a3a">  App org.zowe.api.catalog installed to /u/stevenh/</span><span style="color:#1d1df0">1058/</span><br><span style="color:#3a3a3a">Ended </span><span style="color:#1d1df0">with</span><span style="color:#3a3a3a"> rc=0</span><br><span style="color:#3a3a3a">Verifying node exists</span><br><span style="color:#3a3a3a">/usr/lpp/IBM/cnj/v8r0/IBM/node-latest-os390-s390x//bin/node is /usr/lpp/IBM/cnj</span><br><span style="color:#3a3a3a">Running app-server plugin installer. Log=/u/stevenh/</span><span style="color:#1d1df0">1058/</span><span style="color:#3a3a3a">instance-dir/logs/inst</span><br><span style="color:#3a3a3a">utils_path=/u/stevenh/</span><span style="color:#1d1df0">1058/</span><span style="color:#3a3a3a">runtime/components/app-server/share/zlux-server-fram</span><br><span style="color:#3a3a3a">app_path=/u/stevenh/</span><span style="color:#1d1df0">1058/</span><span style="color:#3a3a3a">instance-dir/workspace/explorer-jes</span><br><span style="color:#3a3a3a">json_path=/u/stevenh/</span><span style="color:#1d1df0">1058/</span><span style="color:#3a3a3a">instance-dir/workspace/app-server/serverConfig/server</span><br><span style="color:#1d1df0">2020-02-05 17:06:33.795</span><span style="color:#3a3a3a"> &lt;ZWED:</span><span style="color:#1d1df0">66119</span><span style="color:#3a3a3a">&gt; ZWESVUSR INFO (_zsf.utils,util.js:</span><span style="color:#1d1df0">280</span><span style="color:#3a3a3a">) Res</span><br><span style="color:#1d1df0">2020-02-05 17:06:33.797</span><span style="color:#3a3a3a"> &lt;ZWED:</span><span style="color:#1d1df0">66119</span><span style="color:#3a3a3a">&gt; ZWESVUSR INFO (_zsf.utils,util.js:</span><span style="color:#1d1df0">280</span><span style="color:#3a3a3a">) Res</span><br><span style="color:#1d1df0">2020-02-05 17:06:33.798</span><span style="color:#3a3a3a"> &lt;ZWED:</span><span style="color:#1d1df0">66119</span><span style="color:#3a3a3a">&gt; ZWESVUSR INFO (_zsf.utils,util.js:</span><span style="color:#1d1df0">280</span><span style="color:#3a3a3a">) Res</span><br><span style="color:#1d1df0">2020-02-05 17:06:33.800</span><span style="color:#3a3a3a">  Registering App (ID=org.zowe.explorer-jes) </span><span style="color:#2a9a2a">with App Se</span><br><span style="color:#1d1df0">2020-02-05 17:06:33.802</span><span style="color:#3a3a3a">  App org.zowe.explorer-jes installed to /u/stevenh/</span><span style="color:#1d1df0">1058</span><br><span style="color:#3a3a3a">Ended </span><span style="color:#1d1df0">with</span><span style="color:#3a3a3a"> rc=0</span><br><span style="color:#3a3a3a">Verifying node exists</span><br><span style="color:#3a3a3a">/usr/lpp/IBM/cnj/v8r0/IBM/node-latest-os390-s390x//bin/node is /usr/lpp/IBM/cnj</span><br><span style="color:#3a3a3a">Running app-server plugin installer. Log=/u/stevenh/</span><span style="color:#1d1df0">1058/</span><span style="color:#3a3a3a">instance-dir/logs/inst</span><br><span style="color:#3a3a3a">utils_path=/u/stevenh/</span><span style="color:#1d1df0">1058/</span><span style="color:#3a3a3a">runtime/components/app-server/share/zlux-server-fram</span><br><span style="color:#3a3a3a">app_path=/u/stevenh/</span><span style="color:#1d1df0">1058/</span><span style="color:#3a3a3a">instance-dir/workspace/explorer-mvs</span><br><span style="color:#3a3a3a">json_path=/u/stevenh/</span><span style="color:#1d1df0">1058/</span><span style="color:#3a3a3a">instance-dir/workspace/app-server/serverConfig/server</span></div></div>
<div class="a" style="left:6.3px;top:427px;width:205.5px;height:214.5px;background:#dfe7f0;border-radius:6px;border:1px solid #f2f5f9"></div>
<div class="a" style="left:206.8px;top:540px;width:4.9px;height:101.3px;background:#9a9ea6;border-radius:0 0 5px 0"></div>
<svg class="a" style="left:27px;top:640px" width="26" height="14"><path d="M0 1.5H25.5L13 13.5Z" fill="#dfe7f0"/></svg>
<div class="a" style="left:6.3px;top:427px;width:201.5px;height:214.5px;overflow:hidden;border-radius:6px"><svg class="a" style="left:24.9px;top:-24.4px" width="24.6" height="31" viewBox="0 0 24.6 31"><defs><clipPath id="pc"><circle cx="12.3" cy="18.7" r="12.3"/></clipPath></defs><g clip-path="url(#pc)"><rect x="0" y="0" width="25" height="31" fill="#e8705f"/><rect x="4" y="20" width="20" height="11" fill="#2f2f33"/><path d="M6 24.2H15M6 27.6H12" stroke="#4aa3e0" stroke-width="1.4"/><path d="M17 24.2H24" stroke="#39c24a" stroke-width="1.4"/></g></svg></div>
<svg class="a" style="left:28px;top:439.6px" width="30.4" height="30.4" viewBox="0 0 30.4 30.4"><defs><clipPath id="ic454"><circle cx="15.2" cy="15.2" r="15.2"/></clipPath></defs><circle cx="15.2" cy="15.2" r="15.2" fill="#d3ede6"/><g clip-path="url(#ic454)"><path d="M8 16.6H31" stroke="#2bb5a6" stroke-width="1.8"/><path d="M8.8 16.6V30" stroke="#2bb5a6" stroke-width="0.9"/><path d="M10 20.5H12.6M10 24H12.6M10 27.5H12.6" stroke="#2bb5a6" stroke-width="1.3"/><path d="M13.5 20.5H30M13.5 24H30M13.5 27.5H30" stroke="#2bb5a6" stroke-width="0.6" opacity="0.45"/><path d="M4.4 17.8V19.2H8.8" stroke="#2bb5a6" stroke-width="0.8" fill="none"/><circle cx="4.4" cy="16.4" r="1.4" fill="none" stroke="#2bb5a6" stroke-width="0.8"/><path d="M10.8 3.2H14L14.8 4.2H19V9.2H10.8Z" fill="#2bb5a6" stroke="#222" stroke-width="0.8"/><rect x="13.6" y="8.4" width="3.6" height="4.6" fill="#bbb" stroke="#222" stroke-width="0.8"/></g></svg>
<div class="a" style="left:64.8px;top:444.80px;line-height:20px;font-size:8.8px;color:#333;font-weight:400;font-family:'Liberation Sans';white-space:pre;transform:scaleX(0.91);transform-origin:0 50%">USS Explorer</div>
<svg class="a" style="left:28px;top:476.3px" width="30.4" height="30.4" viewBox="0 0 30.4 30.4"><defs><clipPath id="ic491"><circle cx="15.2" cy="15.2" r="15.2"/></clipPath></defs><circle cx="15.2" cy="15.2" r="15.2" fill="#fbdc9a"/><g clip-path="url(#ic491)"><path d="M8 16.6H31" stroke="#f59a4a" stroke-width="1.8"/><path d="M8.8 16.6V30" stroke="#f59a4a" stroke-width="0.9"/><path d="M10 20.5H12.6M10 24H12.6M10 27.5H12.6" stroke="#f59a4a" stroke-width="1.3"/><path d="M13.5 20.5H30M13.5 24H30M13.5 27.5H30" stroke="#f59a4a" stroke-width="0.6" opacity="0.45"/><path d="M4.4 17.8V19.2H8.8" stroke="#f59a4a" stroke-width="0.8" fill="none"/><circle cx="4.4" cy="16.4" r="1.4" fill="none" stroke="#f59a4a" stroke-width="0.8"/><path d="M10.8 3.2H14L14.8 4.2H19V9.2H10.8Z" fill="#f59a4a" stroke="#222" stroke-width="0.8"/><rect x="13.6" y="8.4" width="3.6" height="4.6" fill="#bbb" stroke="#222" stroke-width="0.8"/></g></svg>
<div class="a" style="left:64.8px;top:481.50px;line-height:20px;font-size:8.8px;color:#333;font-weight:400;font-family:'Liberation Sans';white-space:pre;transform:scaleX(0.91);transform-origin:0 50%">MVS Explorer</div>
<svg class="a" style="left:28px;top:512.8px" width="30.4" height="30.4" viewBox="0 0 30.4 30.4"><defs><clipPath id="ic528"><circle cx="15.2" cy="15.2" r="15.2"/></clipPath></defs><circle cx="15.2" cy="15.2" r="15.2" fill="#dcedfb"/><g clip-path="url(#ic528)"><path d="M8 16.6H31" stroke="#3a8ae6" stroke-width="1.8"/><path d="M8.8 16.6V30" stroke="#3a8ae6" stroke-width="0.9"/><path d="M10 20.5H12.6M10 24H12.6M10 27.5H12.6" stroke="#3a8ae6" stroke-width="1.3"/><path d="M13.5 20.5H30M13.5 24H30M13.5 27.5H30" stroke="#3a8ae6" stroke-width="0.6" opacity="0.45"/><path d="M4.4 17.8V19.2H8.8" stroke="#3a8ae6" stroke-width="0.8" fill="none"/><circle cx="4.4" cy="16.4" r="1.4" fill="none" stroke="#3a8ae6" stroke-width="0.8"/><circle cx="12" cy="6.3" r="2.3" fill="#2a6ad0" stroke="#111" stroke-width="1.4" stroke-dasharray="1 0.5"/><circle cx="18" cy="5.6" r="2.3" fill="#2a6ad0" stroke="#111" stroke-width="1.4" stroke-dasharray="1 0.5"/></g></svg>
<div class="a" style="left:64.8px;top:518.00px;line-height:20px;font-size:8.8px;color:#333;font-weight:400;font-family:'Liberation Sans';white-space:pre;transform:scaleX(0.91);transform-origin:0 50%">JES Explorer</div>
<svg class="a" style="left:28.5px;top:550px" width="30" height="30" viewBox="0 0 30 30"><circle cx="15" cy="15" r="14.8" fill="#36a69b"/><path d="M9 22L25 11L29 17L17 28Z" fill="#2d8f86" opacity="0.6"/><path d="M20.5 5.5L24.5 9.5L12 22L8 18Z" fill="#f4b63f"/><path d="M20.5 5.5L24.5 9.5L23 11L19 7Z" fill="#e9645d"/><path d="M8 18L12 22L6.5 23.5Z" fill="#f3e2b8"/><path d="M6.5 23.5L7.4 21.2L8.8 22.6Z" fill="#333"/></svg>
<div class="a" style="left:64.8px;top:555.00px;line-height:20px;font-size:8.8px;color:#333;font-weight:400;font-family:'Liberation Sans';white-space:pre;transform:scaleX(0.91);transform-origin:0 50%">Editor</div>
<svg class="a" style="left:28.5px;top:587px" width="30" height="30" viewBox="0 0 30 30"><circle cx="15" cy="15" r="14.8" fill="#e8e8ea"/><path d="M8 19L20 19L27 25A15 15 0 0 1 15 29.8Z" fill="#cfcfd2"/><rect x="5" y="7" width="17" height="13" fill="#fff" stroke="#3aa0e8" stroke-width="1.3"/><text x="6.6" y="16.5" font-family="Liberation Sans" font-weight="700" font-size="6.2" fill="#2244aa">API</text><path d="M19 13.5H24M19 11.5L24 10M19 15.5L24 17" stroke="#5566cc" stroke-width="0.9"/><circle cx="24.5" cy="10" r="1.2" fill="none" stroke="#5566cc" stroke-width="0.7"/><circle cx="25" cy="13.5" r="1.2" fill="none" stroke="#5566cc" stroke-width="0.7"/><circle cx="24.5" cy="17" r="1.2" fill="none" stroke="#5566cc" stroke-width="0.7"/></svg>
<div class="a" style="left:64.8px;top:591.80px;line-height:20px;font-size:8.8px;color:#333;font-weight:400;font-family:'Liberation Sans';white-space:pre;transform:scaleX(0.91);transform-origin:0 50%">API Catalog</div>
<div class="a" style="left:0;top:654px;width:1263px;height:43px;background:linear-gradient(180deg,#58799c,#52739a);border-radius:0 0 4px 4px"></div>
<div class="a" style="left:74px;top:654px;width:3px;height:43px;background:#3b6480;"></div>
<div class="a" style="left:1126px;top:654px;width:2px;height:43px;background:#3f6384;"></div>
<div class="a" style="left:20.5px;top:657.3px;width:36.2px;height:36.3px;border:2px solid #b8dde9;border-radius:5px;background:#6093c6"></div>
<div class="a" style="left:23.8px;top:660.0px;width:8.4px;height:8.4px;background:#abd0e2;"></div>
<div class="a" style="left:34.35px;top:660.0px;width:8.4px;height:8.4px;background:#abd0e2;"></div>
<div class="a" style="left:44.9px;top:660.0px;width:8.4px;height:8.4px;background:#abd0e2;"></div>
<div class="a" style="left:23.8px;top:670.6px;width:8.4px;height:8.4px;background:#abd0e2;"></div>
<div class="a" style="left:34.35px;top:670.6px;width:8.4px;height:8.4px;background:#abd0e2;"></div>
<div class="a" style="left:44.9px;top:670.6px;width:8.4px;height:8.4px;background:#abd0e2;"></div>
<div class="a" style="left:23.8px;top:681.2px;width:8.4px;height:8.4px;background:#abd0e2;"></div>
<svg class="a" style="left:98.30px;top:656px" width="37" height="37" viewBox="0 0 37 37"><defs><clipPath id="c0"><circle cx="18.5" cy="18.5" r="18.3"/></clipPath></defs><circle cx="18.5" cy="18.5" r="18.3" fill="#e8705f"/><g clip-path="url(#c0)"><path d="M12 20L40 44L40 40L20 20Z" fill="#c95a4a" opacity="0.5"/><rect x="8" y="10" width="30" height="30" fill="#2f2f33"/><rect x="8" y="10" width="30" height="5" fill="#eee"/><rect x="8" y="10" width="1.8" height="30" fill="#eee"/><path d="M11 12.5H12.5M14 12.5H15.5M17 12.5H18.5" stroke="#888" stroke-width="1"/><path d="M12 19H16M18 19H24M26 19H31" stroke="#fff" stroke-width="1.6"/><rect x="27" y="22" width="3" height="4" fill="#fff"/><path d="M12 25H19" stroke="#39c24a" stroke-width="1.6"/><path d="M12 31H22" stroke="#4aa3e0" stroke-width="1.6"/><path d="M25 31H34" stroke="#39c24a" stroke-width="1.6"/><path d="M12 35H18" stroke="#4aa3e0" stroke-width="1.6"/></g></svg>
<div class="a" style="left:115.3px;top:694.3px;width:3px;height:2.5px;background:#4ec3f0;"></div>
<svg class="a" style="left:141.08px;top:656px" width="37" height="37" viewBox="0 0 37 37"><defs><clipPath id="c1"><circle cx="18.5" cy="18.5" r="18.3"/></clipPath></defs><circle cx="18.5" cy="18.5" r="18.3" fill="#6b8be0"/><g clip-path="url(#c1)"><rect x="8" y="10" width="30" height="30" fill="#333338"/><rect x="8" y="10" width="30" height="5" fill="#eee"/><rect x="8" y="10" width="1.8" height="30" fill="#eee"/><path d="M11 12.5H12.5M14 12.5H15.5M17 12.5H18.5" stroke="#888" stroke-width="1"/><path d="M11.5 17.5L14 19.5L11.5 21.5" stroke="#fff" stroke-width="1" fill="none"/><rect x="15" y="17" width="2.5" height="3.5" fill="#fff"/></g></svg>
<svg class="a" style="left:183.86px;top:656px" width="37" height="37" viewBox="0 0 37 37"><defs><clipPath id="c2"><circle cx="18.5" cy="18.5" r="18.3"/></clipPath></defs><circle cx="18.5" cy="18.5" r="18.3" fill="#bdbdbd"/><g clip-path="url(#c2)"><path d="M18.5 28L37 37L37 20L26 10Z" fill="#a5a5a5" opacity="0.7"/><path d="M18.5 6L29.5 10L27.7 25.5L18.5 31L9.3 25.5L7.5 10Z" fill="#dd3333"/><path d="M18.5 6L29.5 10L27.7 25.5L18.5 31Z" fill="#c32626"/><path d="M18.5 9L12 25H14.5L15.8 21.5H21.2L22.5 25H25Z M16.6 19.3L18.5 14.3L20.4 19.3Z" fill="#fff"/></g></svg>
<svg class="a" style="left:226.64px;top:656px" width="37" height="37" viewBox="0 0 37 37"><defs><clipPath id="c3"><circle cx="18.5" cy="18.5" r="18.3"/></clipPath></defs><circle cx="18.5" cy="18.5" r="18.3" fill="#6a977c"/><g clip-path="url(#c3)"><path d="M18.5 18.5L37 37L37 26L26 12Z" fill="#5a8669" opacity="0.6"/><g fill="none" stroke="#44d7e8" stroke-width="1.3"><ellipse cx="18.5" cy="18.5" rx="11" ry="4.2"/><ellipse cx="18.5" cy="18.5" rx="11" ry="4.2" transform="rotate(60 18.5 18.5)"/><ellipse cx="18.5" cy="18.5" rx="11" ry="4.2" transform="rotate(-60 18.5 18.5)"/></g><circle cx="18.5" cy="18.5" r="2.2" fill="#44d7e8"/></g></svg>
<svg class="a" style="left:269.42px;top:656px" width="37" height="37" viewBox="0 0 37 37"><defs><clipPath id="c4"><circle cx="18.5" cy="18.5" r="18.3"/></clipPath></defs><circle cx="18.5" cy="18.5" r="18.3" fill="#2e4160"/><g clip-path="url(#c4)"><path d="M10 27L37 37L37 24L28 12Z" fill="#25354f" opacity="0.7"/><rect x="7" y="10" width="23" height="17" fill="#e6e6e6"/><rect x="7" y="10" width="23" height="3.5" fill="#c9c9c9"/><path d="M9 11.8H10M11.5 11.8H12.5M14 11.8H15" stroke="#888" stroke-width="1"/><path d="M13 19.5L17 23L25 15" stroke="#2a7bd8" stroke-width="2.3" fill="none"/></g></svg>
<svg class="a" style="left:312.20px;top:656px" width="37" height="37" viewBox="0 0 37 37"><defs><clipPath id="c5"><circle cx="18.5" cy="18.5" r="18.3"/></clipPath></defs><circle cx="18.5" cy="18.5" r="18.3" fill="#dcecfb"/><g clip-path="url(#c5)"><path d="M12 24H37" stroke="#3a8ae0" stroke-width="1.6"/><path d="M12 22.3H37" stroke="#8fc0f0" stroke-width="0.8"/><path d="M13.5 24V37" stroke="#3a8ae0" stroke-width="0.9"/><path d="M14 27.5H16.5M14 30.5H16.5M14 33.5H16.5M14 36.5H16.5" stroke="#2a6ad0" stroke-width="1.3"/><path d="M17.5 27.5H37M17.5 30.5H37M17.5 33.5H37" stroke="#9cc8f2" stroke-width="0.8"/><path d="M5.2 19.5V23.5H12" stroke="#3a8ae0" stroke-width="0.9" fill="none"/><circle cx="5.2" cy="18" r="1.6" fill="none" stroke="#3a8ae0" stroke-width="0.9"/><circle cx="15" cy="12" r="2.5" fill="#2a6ad0" stroke="#111" stroke-width="1.6" stroke-dasharray="1.2 0.6"/><circle cx="21.3" cy="11" r="2.5" fill="#2a6ad0" stroke="#111" stroke-width="1.6" stroke-dasharray="1.2 0.6"/></g></svg>
<div class="a" style="left:329.2px;top:694.3px;width:3px;height:2.5px;background:#4ec3f0;"></div>
<svg class="a" style="left:354.98px;top:656px" width="37" height="37" viewBox="0 0 37 37"><defs><clipPath id="c6"><circle cx="18.5" cy="18.5" r="18.3"/></clipPath></defs><circle cx="18.5" cy="18.5" r="18.3" fill="#36a69b"/><g clip-path="url(#c6)"><path d="M11 27L37 37L37 20L28 12Z" fill="#2d8f86" opacity="0.6"/><path d="M25.5 7L30 11.5L15 26.5L10.5 22Z" fill="#f4b63f"/><path d="M25.5 7L30 11.5L28.3 13.2L23.8 8.7Z" fill="#e9645d"/><path d="M10.5 22L15 26.5L8.5 28.5Z" fill="#f3e2b8"/><path d="M8.5 28.5L9.4 25.7L11.3 27.6Z" fill="#333"/></g></svg>
<div class="a" style="left:372.0px;top:694.3px;width:3px;height:2.5px;background:#4ec3f0;"></div>
<svg class="a" style="left:1136.5px;top:666px" width="19" height="19" viewBox="0 0 19 19"><circle cx="9.5" cy="9.5" r="9.3" fill="#e6edf4"/><circle cx="9.5" cy="2.9" r="1" fill="#2a5a93"/><path d="M5 12.4C5.1 8.8 5.1 4.5 9.5 4.1C13.9 4.5 13.9 8.8 14 12.4L15.8 14.5H3.2Z" fill="#2a5a93"/><path d="M8.3 15.2H10.7L9.5 16.9Z" fill="#2a5a93"/><path d="M7 9C7 7.2 7.6 6.3 8.4 6" stroke="#c8d6e6" stroke-width="0.5" fill="none"/></svg>
<svg class="a" style="left:1158.5px;top:666px" width="19" height="19" viewBox="0 0 19 19"><circle cx="9.5" cy="9.5" r="9.3" fill="#e6edf4"/><path d="M7.2 7.4L14.2 14.4" stroke="#1f5d8c" stroke-width="2.2" stroke-linecap="round"/><path d="M3.6 5.6A2.8 2.8 0 0 0 7.6 8.6L6.2 7.2L6.4 5.4L8.1 5.2L9.3 6.6A2.8 2.8 0 0 0 5.6 3.2Z" fill="#1f5d8c"/><path d="M14.7 4.3L11.2 8.1" stroke="#3d7aa8" stroke-width="2.1" stroke-linecap="round"/><path d="M11.2 8.1L5 14.5" stroke="#1f5d8c" stroke-width="1" stroke-linecap="round"/></svg>
<svg class="a" style="left:1181.5px;top:666px" width="19" height="19" viewBox="0 0 19 19"><circle cx="9.5" cy="9.5" r="9.3" fill="#e6edf4"/><circle cx="9.5" cy="6.3" r="3.5" fill="#2a5a93"/><ellipse cx="9.5" cy="14.4" rx="6.5" ry="3.1" fill="#2a5a93"/></svg>
<div class="a" style="left:1190px;top:662.5px;width:66.6px;text-align:right;line-height:12.5px;font-size:8.8px;color:#eef2f6">18:18<br>05/02/2020</div>
<div class="call" style="left:438px;top:51.5px;width:182.5px;height:41px"></div>
<div class="a" style="left:438px;top:61.20px;width:182.5px;text-align:center;line-height:20px;font-size:21.6px;color:#000;white-space:nowrap;-webkit-text-stroke:0.35px #000;transform:scaleY(1.12);transform-origin:50% 50%">File Explorer</div>
<div class="call" style="left:375.5px;top:428.7px;width:181px;height:41px"></div>
<div class="a" style="left:375.5px;top:440.20px;width:181px;text-align:center;line-height:20px;font-size:19.8px;color:#000;white-space:nowrap;-webkit-text-stroke:0.35px #000;transform:scaleY(1.12);transform-origin:50% 50%">JES Explorer</div>
<div class="call" style="left:937px;top:439px;width:256.5px;height:40px"></div>
<div class="a" style="left:937px;top:448.60px;width:256.5px;text-align:center;line-height:20px;font-size:21.6px;color:#000;white-space:nowrap;-webkit-text-stroke:0.35px #000;transform:scaleY(1.12);transform-origin:50% 50%">TN 3270 emulator app</div>
<div class="call" style="left:994.6px;top:619px;width:257.5px;height:39.5px"></div>
<div class="a" style="left:994.6px;top:628.90px;width:257.5px;text-align:center;line-height:20px;font-size:21.4px;color:#000;white-space:nowrap;-webkit-text-stroke:0.35px #000;transform:scaleY(1.12);transform-origin:50% 50%">Logout / Preferences</div>
<div class="call" style="left:138px;top:479.3px;width:125px;height:79.2px"></div>
<div class="a" style="left:138px;top:495.00px;width:125px;text-align:center;line-height:20px;font-size:21.3px;color:#000;white-space:nowrap;-webkit-text-stroke:0.35px #000;transform:scaleY(1.12);transform-origin:50% 50%">Available</div>
<div class="a" style="left:138px;top:524.20px;width:125px;text-align:center;line-height:20px;font-size:21.3px;color:#000;white-space:nowrap;-webkit-text-stroke:0.35px #000;transform:scaleY(1.12);transform-origin:50% 50%">Apps</div>
<div class="call" style="left:439.2px;top:671.3px;width:217.5px;height:50px"></div>
<div class="a" style="left:439.2px;top:682.80px;width:217.5px;text-align:center;line-height:20px;font-size:21.2px;color:#000;white-space:nowrap;-webkit-text-stroke:0.35px #000;transform:scaleY(1.12);transform-origin:50% 50%">Pinned Apps</div>
<svg class="a" style="left:0;top:0" width="1265" height="712"><g fill="#ffc000" stroke="none"><path d="M172 558L63.5 646.5" stroke="#ffc000" stroke-width="4.4"/><path d="M54.7 653.6L61.1 638.8L70.5 650.6Z"/><path d="M437.5 699L411 685.5" stroke="#ffc000" stroke-width="4.4"/><path d="M403.9 680.5L420.4 681.2L413.4 693.7Z"/></g></svg>
</body></html>
